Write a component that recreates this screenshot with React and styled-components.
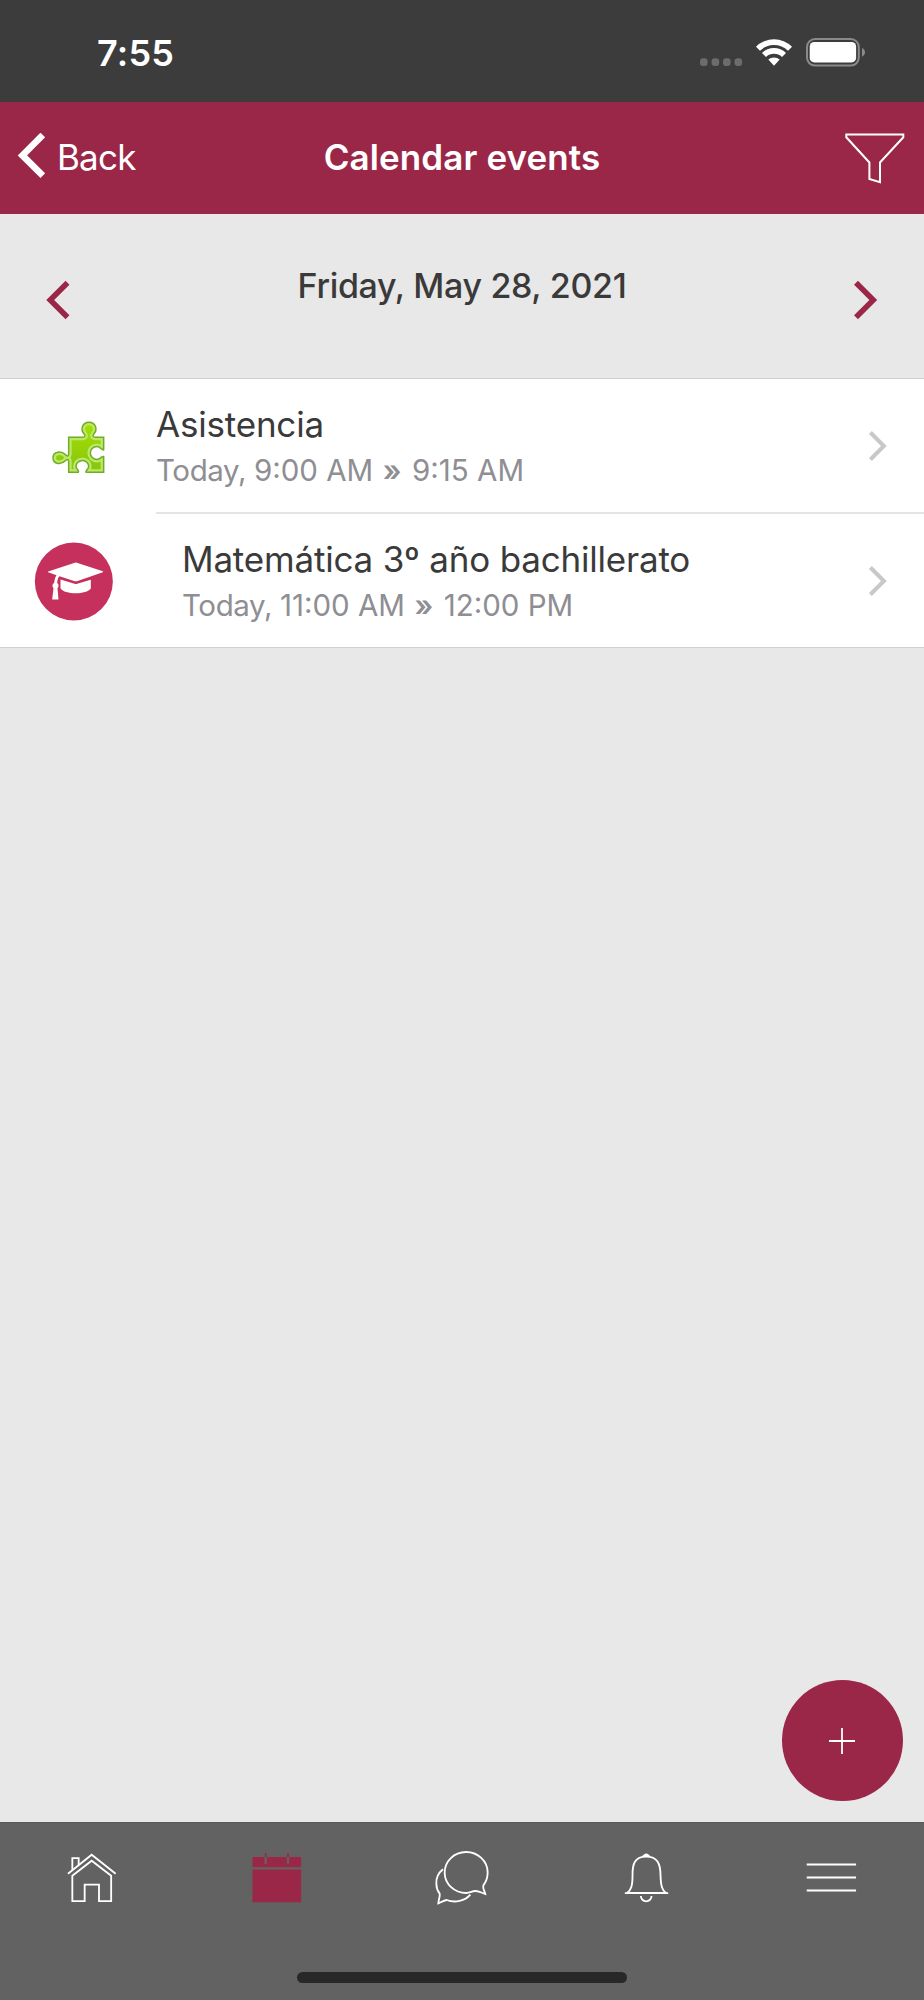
import React from "react";
import styled, { createGlobalStyle } from "styled-components";

function App() {
  return (
    <Screen>
      <GlobalStyle />
      <StatusBar>
        <Clock>7:55</Clock>
        <StatusIcons />
      </StatusBar>
      <Header>
        <BackButton>
          <svg width="30" height="48" viewBox="16 133 30 48">
            <path d="M42.8 135L22.4 155.4L42.8 175.7" fill="none" stroke="#fff" strokeWidth="6.6" />
          </svg>
          <BackText>Back</BackText>
        </BackButton>
        <Title>Calendar events</Title>
        <FilterButton>
          <svg width="62" height="54" viewBox="844 130 62 54">
            <path d="M846.3 134.6H903.3V137.3L880 162.5V182.2L869.4 178.9V162.5L846.3 137.3Z" fill="none" stroke="#fff" strokeWidth="2" />
          </svg>
        </FilterButton>
      </Header>
      <DateBar>
        <DateArrow />
        <DateText>Friday, May 28, 2021</DateText>
        <DateArrow next />
      </DateBar>
      <List>
        {events.map((event) => (
          <Row key={event.name}>
            <IconBox>{event.icon}</IconBox>
            <RowBody $inset={event.inset}>
              <Info>
                <Name>{event.name}</Name>
                <Time>
                  <Day>Today, </Day>
                  {event.from} <Arrows>»</Arrows> {event.to}
                </Time>
              </Info>
              <svg width="20" height="34" viewBox="869 428.5 20 34">
                <path d="M871.4 432L884.9 445.5L871.4 459" fill="none" stroke="#c8c7cc" strokeWidth="4" />
              </svg>
            </RowBody>
          </Row>
        ))}
      </List>
      <Content>
        <Fab>
          <svg width="28" height="28" viewBox="0 0 28 28">
            <path d="M14 1V27M1 14H27" stroke="#fff" strokeWidth="1.8" />
          </svg>
        </Fab>
      </Content>
      <TabBar>
        <Tab><HomeIcon /></Tab>
        <Tab><CalendarIcon /></Tab>
        <Tab><ChatIcon /></Tab>
        <Tab><BellIcon /></Tab>
        <Tab><MenuIcon /></Tab>
        <HomeIndicator />
      </TabBar>
    </Screen>
  );
}

function StatusIcons() {
  return (
    <svg width="168" height="34" viewBox="699 36 168 34">
      <g fill="#6c6c6c">
        <rect x="700" y="58.3" width="7.6" height="7.6" rx="3" />
        <rect x="711.6" y="58.3" width="7.6" height="7.6" rx="3" />
        <rect x="723" y="58.3" width="7.6" height="7.6" rx="3" />
        <rect x="734.5" y="58.3" width="7.6" height="7.6" rx="3" />
      </g>
      <g fill="#fff">
        <path d="M756 46.7A25.5 25.5 0 0 1 792 46.7L788 50.7A20 20 0 0 0 760 50.7Z" />
        <path d="M762 53A17 17 0 0 1 786 53L782 57A11.5 11.5 0 0 0 766 57Z" />
        <path d="M768.3 59.6A8.5 8.5 0 0 1 779.7 59.6L774 65.8Z" />
        <rect x="809.7" y="42" width="46.4" height="20.4" rx="4.5" />
      </g>
      <rect x="807" y="39" width="51.8" height="26.6" rx="8" fill="none" stroke="#8a8a8a" strokeWidth="2" />
      <path d="M862 48C864 49 865 50.5 865 52.3C865 54.2 864 55.7 862 56.7Z" fill="#8a8a8a" />
    </svg>
  );
}

function DateArrow({ next }) {
  return (
    <ArrowBox>
      <svg width="28" height="44" viewBox={next ? "851 277.7 28 44" : "45 277.7 28 44"}>
        <path
          d={next ? "M856 282.4L873.3 299.7L856 317" : "M67.5 282.4L50.2 299.7L67.5 317"}
          fill="none"
          stroke="#9a2748"
          strokeWidth="5.5"
        />
      </svg>
    </ArrowBox>
  );
}

const puzzlePath =
  "M205 197H246C254 197 256 193 251 187C240 175 245 152 266 152C287 152 292 175 281 187C276 193 278 197 286 197H310V235C304 237 300 225 290 225C278 225 270 234 270 244C270 255 279 264 290 264C300 264 304 253 310 255V302H257C254 297 265 293 265 285C265 275 257 267 246 267C236 267 227 275 227 285C227 293 238 297 234 302H205V270C205 262 200 262 195 268C184 280 158 280 158 259C158 238 184 238 195 249C200 255 205 255 205 247Z";

function PuzzleIcon() {
  return (
    <svg width="56" height="56" viewBox="137 142.5 168 168" overflow="visible">
      <defs>
        <linearGradient id="leaf" x1="0" y1="0" x2="0" y2="1">
          <stop offset="0" stopColor="#a8e000" />
          <stop offset="1" stopColor="#86c410" />
        </linearGradient>
        <clipPath id="piece">
          <path d={puzzlePath} />
        </clipPath>
      </defs>
      <path d={puzzlePath} fill="url(#leaf)" />
      <path d={puzzlePath} fill="none" stroke="#b9e86a" strokeWidth="18" clipPath="url(#piece)" />
      <path d={puzzlePath} fill="none" stroke="#72ab24" strokeWidth="4.5" />
    </svg>
  );
}

function CourseIcon() {
  return (
    <svg width="78" height="78" viewBox="104.5 514.5 234 234" overflow="visible">
      <circle cx="221" cy="633" r="117" fill="#c5305c" />
      <g fill="#fff">
        <path d="M144 603L224 576.5Q227 575.5 230 576.5L308 602.5Q310 604 308 605.5L230 632Q227 633 224 632L178 617C173 621 172 629 171 637C177 643 176 649 172 653L175 687H156L160 653C155 648 156 641 162 637C163 628 165 620 169 614L144 605.5Q142 604 144 603Z" />
        <path d="M181 627L223 640Q227 641 231 640L272 628V654C259 673 194 673 181 654Z" />
      </g>
    </svg>
  );
}

function HomeIcon() {
  return (
    <TabIcon viewBox="73 105 168 168">
      <path d="M85 176L156 119L228 176" />
      <path d="M98 258.5V182L156 137L214.5 182V258.5H178V209H135V258.5Z" />
      <path d="M98 164V129.5H117V150" />
    </TabIcon>
  );
}

function CalendarIcon() {
  return (
    <TabIcon viewBox="627.6 105 168 168" $active>
      <path d="M638 126H674V146H681V126H741V146H748V126H784V157H638Z" />
      <path d="M638 163.5H784V261.5H638Z" />
      <path d="M675 114H680V126H675ZM742 114H747V126H742Z" />
    </TabIcon>
  );
}

function ChatIcon() {
  return (
    <TabIcon viewBox="102 105 168 168">
      <path d="M256 237C255 229 247 221 250 211C259 200 263 188 263 172A64.5 61.5 0 1 0 199 234C209 234 216 229 225 228C236 227 246 234 256 237Z" />
      <path d="M129 163C114 175 108 190 109 206C109 219 113 228 119 236C121 245 115 255 115 265C124 261 132 256 140 255C165 265 195 258 211 239" />
    </TabIcon>
  );
}

function BellIcon() {
  return (
    <TabIcon viewBox="656.4 105 168 168">
      <path d="M681 234C692 225 697 214 697 182C696 145 705 125 738 125C771 125 781 145 781 182C782 214 786 225 797 234Z" />
      <path d="M674 234.5H804" />
      <path d="M733 120.5Q738 116 743 120.5Z" />
      <path d="M722 243A16 16 0 0 0 754 243" />
    </TabIcon>
  );
}

function MenuIcon() {
  return (
    <TabIcon viewBox="130.8 105 168 168">
      <path d="M139 148.5H287M139 187.5H287M139 226.5H287" />
    </TabIcon>
  );
}

const events = [
  { name: "Asistencia", from: "9:00 AM", to: "9:15 AM", icon: <PuzzleIcon />, inset: 0 },
  { name: "Matemática 3º año bachillerato", from: "11:00 AM", to: "12:00 PM", icon: <CourseIcon />, inset: 26 },
];

const GlobalStyle = createGlobalStyle`
  body {
    margin: 0;
    background: #e8e8e8;
    font-family: Inter, "Liberation Sans", sans-serif;
  }
`;

const Screen = styled.div`
  display: flex;
  flex-direction: column;
  width: 924px;
  height: 2000px;
  background: #e8e8e8;
  overflow: hidden;
`;

const StatusBar = styled.div`
  display: flex;
  justify-content: space-between;
  align-items: center;
  box-sizing: border-box;
  height: 102px;
  padding: 4px 57px 0 97px;
  background: #3c3c3c;
  color: #fff;
`;

const Clock = styled.div`
  font-size: 36px;
  font-weight: 600;
  letter-spacing: 0.2px;
`;

const Header = styled.div`
  display: grid;
  grid-template-columns: 1fr auto 1fr;
  align-items: center;
  box-sizing: border-box;
  height: 112px;
  padding-bottom: 2px;
  background: #9a2748;
  color: #fff;
`;

const BackButton = styled.div`
  display: flex;
  align-items: center;
  padding-left: 16px;
  gap: 11px;
`;

const BackText = styled.span`
  font-size: 35px;
  letter-spacing: -0.8px;
`;

const Title = styled.div`
  font-size: 35px;
  font-weight: 600;
  letter-spacing: 0.1px;
`;

const FilterButton = styled.div`
  display: flex;
  justify-content: flex-end;
  padding-right: 18px;
`;

const DateBar = styled.div`
  display: flex;
  justify-content: space-between;
  box-sizing: border-box;
  height: 165px;
  padding: 50px 45px 0;
  border-bottom: 1px solid #cfcfcf;
`;

const ArrowBox = styled.div`
  padding-top: 14px;
`;

const DateText = styled.div`
  color: #3a3a3a;
  font-size: 34px;
  line-height: 44px;
  font-weight: 500;
  letter-spacing: -0.32px;
`;

const List = styled.div`
  background: #fff;
  border-bottom: 1px solid #d0d0d0;
`;

const Row = styled.div`
  display: flex;
  height: 135px;

  &:last-child {
    height: 133px;
  }
`;

const IconBox = styled.div`
  display: flex;
  align-items: center;
  justify-content: center;
  width: 147px;
  padding-right: 9px;
`;

const RowBody = styled.div`
  display: flex;
  flex: 1;
  justify-content: space-between;
  align-items: center;
  padding: 0 36px 0 ${(props) => props.$inset}px;
  border-bottom: 2px solid #e4e4e4;

  ${Row}:last-child & {
    border-bottom: none;
  }
`;

const Info = styled.div`
  padding-bottom: 2px;
`;

const Name = styled.div`
  color: #3a3a3a;
  font-size: 35px;
  line-height: 44px;
  letter-spacing: -0.2px;
`;

const Time = styled.div`
  margin-top: 6px;
  color: #8e8e93;
  font-size: 29.5px;
  line-height: 36px;
`;

const Day = styled.span`
  letter-spacing: -0.4px;
`;

const Arrows = styled.span`
  margin: 0 2.3px 0 1.2px;
  font-weight: 600;
`;

const Content = styled.div`
  position: relative;
  flex: 1;
`;

const Fab = styled.div`
  position: absolute;
  right: 21.5px;
  bottom: 21px;
  display: flex;
  align-items: center;
  justify-content: center;
  width: 121px;
  height: 121px;
  border-radius: 50%;
  background: #9a2748;
`;

const TabBar = styled.div`
  position: relative;
  display: flex;
  box-sizing: border-box;
  height: 178px;
  padding-top: 27px;
  border-top: 1px solid #585858;
  background: #626262;
`;

const Tab = styled.div`
  display: flex;
  flex: 1;
  justify-content: center;
`;

const TabIcon = styled.svg`
  width: 56px;
  height: 56px;
  fill: ${(props) => (props.$active ? "#9a2748" : "none")};
  stroke: ${(props) => (props.$active ? "none" : "#fff")};
  stroke-width: 5.5px;
`;

const HomeIndicator = styled.div`
  position: absolute;
  left: 297px;
  bottom: 17px;
  width: 330px;
  height: 11px;
  border-radius: 6px;
  background: #282828;
`;

export default App;
